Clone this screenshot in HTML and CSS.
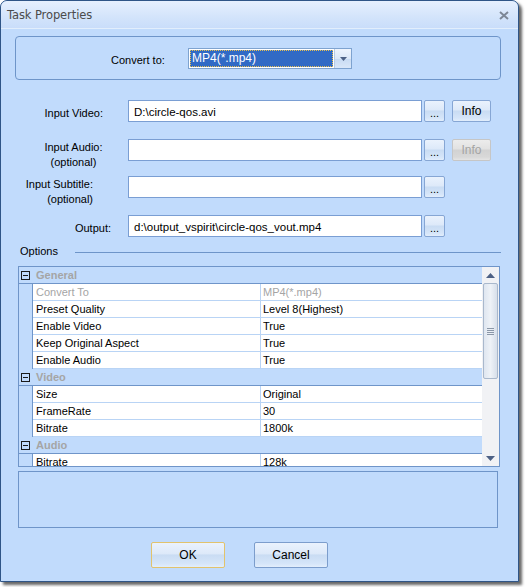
FILE: index.html
```html
<!DOCTYPE html>
<html>
<head>
<meta charset="utf-8">
<link rel="stylesheet" href="styles.css">
</head>
<body>
<div class="window">
  <div class="titlebar">
    <span class="title">Task Properties</span>
    <svg class="close" width="10" height="9" viewBox="0 0 10 9"><path d="M1 1 L9 8 M9 1 L1 8" stroke="#7d8796" stroke-width="2" fill="none"/></svg>
  </div>
  <div class="client">
    <div class="groupbox">
      <span class="conv-label">Convert to:</span>
      <div class="combo">
        <div class="combo-val"><span class="combo-text">MP4(*.mp4)</span></div>
        <div class="combo-btn"><svg width="7" height="4" viewBox="0 0 7 4"><path d="M0 0 H7 L3.5 4 Z" fill="#4d6185"/></svg></div>
      </div>
    </div>

    <div class="row row-video">
      <div class="lbl lbl-video">Input Video:</div>
      <div class="textbox">D:\circle-qos.avi</div>
      <button class="btn btn-dots">...</button>
      <button class="btn btn-info">Info</button>
    </div>
    <div class="row row-audio">
      <div class="lbl lbl-audio">Input Audio:<br>(optional)</div>
      <div class="textbox"></div>
      <button class="btn btn-dots">...</button>
      <button class="btn btn-info btn-disabled">Info</button>
    </div>
    <div class="row row-sub">
      <div class="lbl lbl-sub">Input Subtitle:<br>(optional)</div>
      <div class="textbox"></div>
      <button class="btn btn-dots">...</button>
    </div>
    <div class="row row-out">
      <div class="lbl lbl-out">Output:</div>
      <div class="textbox">d:\output_vspirit\circle-qos_vout.mp4</div>
      <button class="btn btn-dots">...</button>
    </div>

    <div class="options-head">
      <span class="options-title">Options</span>
      <div class="options-rule"></div>
    </div>

    <div class="grid">
      <div class="grid-rows">
        <div class="cat"><span class="exp"></span><span class="cat-name">General</span></div>
        <div class="prop"><span class="gutter"></span><span class="pname dis">Convert To</span><span class="pval dis">MP4(*.mp4)</span></div>
        <div class="prop"><span class="gutter"></span><span class="pname">Preset Quality</span><span class="pval">Level 8(Highest)</span></div>
        <div class="prop"><span class="gutter"></span><span class="pname">Enable Video</span><span class="pval">True</span></div>
        <div class="prop"><span class="gutter"></span><span class="pname">Keep Original Aspect</span><span class="pval">True</span></div>
        <div class="prop"><span class="gutter"></span><span class="pname">Enable Audio</span><span class="pval">True</span></div>
        <div class="cat"><span class="exp"></span><span class="cat-name">Video</span></div>
        <div class="prop"><span class="gutter"></span><span class="pname">Size</span><span class="pval">Original</span></div>
        <div class="prop"><span class="gutter"></span><span class="pname">FrameRate</span><span class="pval">30</span></div>
        <div class="prop"><span class="gutter"></span><span class="pname">Bitrate</span><span class="pval">1800k</span></div>
        <div class="cat"><span class="exp"></span><span class="cat-name">Audio</span></div>
        <div class="prop"><span class="gutter"></span><span class="pname">Bitrate</span><span class="pval">128k</span></div>
      </div>
      <div class="scrollbar">
        <div class="sb-arrow"><svg width="9" height="5" viewBox="0 0 9 5"><path d="M0 5 H9 L4.5 0 Z" fill="#4d6185"/></svg></div>
        <div class="sb-track">
          <div class="sb-thumb"><span class="grip"></span><span class="grip"></span><span class="grip"></span><span class="grip"></span></div>
        </div>
        <div class="sb-arrow"><svg width="9" height="5" viewBox="0 0 9 5"><path d="M0 0 H9 L4.5 5 Z" fill="#4d6185"/></svg></div>
      </div>
    </div>

    <div class="desc"></div>

    <div class="actions">
      <button class="btn dlg-btn btn-ok">OK</button>
      <button class="btn dlg-btn">Cancel</button>
    </div>
  </div>
</div>
</body>
</html>
```

FILE: styles.css
```css
html, body {
  margin: 0;
  padding: 0;
  background: #ffffff;
}
body {
  width: 525px;
  height: 587px;
  overflow: hidden;
  font-family: "Liberation Sans", Arial, sans-serif;
  font-size: 11px;
  color: #000;
}
.window {
  box-sizing: border-box;
  width: 519px;
  height: 582px;
  border: 1px solid #2f5587;
  border-radius: 7px 7px 0 0;
  background: #c1dbfc;
  box-shadow: 3px 3px 3px rgba(0, 0, 0, 0.6);
  overflow: hidden;
}
.titlebar {
  height: 28px;
  box-sizing: border-box;
  display: flex;
  align-items: center;
  justify-content: space-between;
  padding: 0 9px 0 6px;
  background: linear-gradient(#e6f0fe, #d3e4fb 60%, #c9ddfa);
  border-bottom: 1px solid #e2eefc;
  border-radius: 6px 6px 0 0;
}
.title {
  font-family: "DejaVu Sans", sans-serif;
  font-size: 11.5px;
  color: #4b4b4b;
  letter-spacing: -0.1px;
  padding-top: 1px;
}
.close {
  margin-top: 1px;
}
.client {
  padding-top: 7px;
}
.groupbox {
  box-sizing: border-box;
  width: 486px;
  height: 44px;
  margin-left: 14px;
  border: 1px solid #6e95c9;
  border-radius: 4px;
  display: flex;
  align-items: center;
  padding-left: 95px;
}
.conv-label {
  width: 77px;
  padding-top: 4px;
}
.combo {
  display: flex;
  box-sizing: border-box;
  width: 164px;
  height: 21px;
  border: 1px solid #7ea3d0;
  background: #fff;
  margin-top: 1px;
}
.combo-val {
  flex: 1;
  padding: 1px;
}
.combo-text {
  display: block;
  box-sizing: border-box;
  height: 100%;
  background: #316ac5;
  color: #fff;
  border: 1px dotted #e8c050;
  font-size: 12px;
  line-height: 15px;
  padding-left: 1px;
}
.combo-btn {
  width: 17px;
  box-sizing: border-box;
  border-left: 1px solid #b7cbe6;
  background: linear-gradient(#eef4fd, #dce8f8 50%, #c8dbf3 51%, #d9e7f9);
  display: flex;
  align-items: center;
  justify-content: center;
}
.row {
  display: flex;
  height: 22px;
  align-items: flex-start;
}
.row-video { margin-top: 20px; }
.row-audio { margin-top: 17px; }
.row-sub { margin-top: 15px; }
.row-out { margin-top: 17px; }
.lbl {
  box-sizing: border-box;
  width: 121px;
  margin-right: 6px;
  line-height: 15px;
  white-space: nowrap;
}
.lbl-video { text-align: right; padding-right: 19px; padding-top: 6px; }
.lbl-audio { text-align: center; padding-left: 24px; padding-top: 1px; }
.lbl-sub { text-align: right; padding-right: 29px; padding-top: 1px; }
.lbl-out { text-align: right; padding-right: 11px; padding-top: 6px; }
.textbox {
  box-sizing: border-box;
  width: 294px;
  height: 22px;
  border: 1px solid #7a9ed3;
  background: #fff;
  padding: 4px 5px 2px;
  font-size: 11.5px;
  line-height: 14px;
  white-space: nowrap;
  overflow: hidden;
}
.btn {
  box-sizing: border-box;
  font-family: "Liberation Sans", Arial, sans-serif;
  font-size: 11px;
  font-weight: normal;
  color: #000;
  border: 1px solid #86a6d4;
  border-radius: 2px;
  background: linear-gradient(#eaf2fd, #dde9f9 45%, #c9dcf3 50%, #d5e5f9 85%, #e2eefc);
  padding: 0;
  margin: 0;
  height: 22px;
}
.btn-dots {
  width: 21px;
  margin-left: 2px;
  padding-top: 3px;
}
.btn-info {
  width: 39px;
  margin-left: 7px;
  font-size: 12px;
}
.btn-disabled {
  color: #a4a4a4;
  border-color: #c6c6c6;
  background: linear-gradient(#ececec, #e2e2e2 45%, #d2d2d2 50%, #d8d8d8 85%, #e4e4e4);
}
.options-head {
  display: flex;
  align-items: center;
  height: 14px;
  margin-top: 7px;
  padding-left: 19px;
}
.options-title {
  margin-right: 17px;
}
.options-rule {
  width: 426px;
  height: 1px;
  background: #6e95c9;
  margin-top: 3px;
}
.grid {
  box-sizing: border-box;
  width: 482px;
  height: 201px;
  margin-top: 8px;
  margin-left: 17px;
  border: 1px solid #6f95c9;
  display: flex;
  overflow: hidden;
}
.grid-rows {
  width: 463px;
  overflow: hidden;
}
.cat, .prop {
  box-sizing: border-box;
  height: 17px;
  display: flex;
  align-items: center;
  white-space: nowrap;
}
.cat {
  background: #c1dbfc;
  border-bottom: 1px solid #6f95c9;
}
.exp {
  box-sizing: border-box;
  width: 9px;
  height: 9px;
  border: 1px solid #1a1a1a;
  margin-left: 2px;
  margin-right: 6px;
  position: relative;
  flex: none;
}
.exp::after {
  content: "";
  position: absolute;
  left: 1px;
  right: 1px;
  top: 3px;
  height: 1px;
  background: #1a1a1a;
}
.cat-name {
  font-weight: bold;
  color: #a5a5a5;
  padding-left: 0;
}
.prop {
  border-bottom: 1px solid #b9d4f5;
}
.gutter {
  width: 13px;
  height: 17px;
  background: #c1dbfc;
  border-right: 1px solid #6f95c9;
  flex: none;
}
.pname {
  box-sizing: border-box;
  width: 228px;
  height: 16px;
  line-height: 16px;
  background: #fff;
  border-right: 1px solid #b9d4f5;
  padding-left: 3px;
  flex: none;
}
.pval {
  flex: 1;
  height: 16px;
  line-height: 16px;
  background: #fff;
  padding-left: 2px;
}
.dis {
  color: #a5a5a5;
}
.scrollbar {
  width: 17px;
  display: flex;
  flex-direction: column;
  background: #f1f2f5;
}
.sb-arrow {
  height: 16px;
  display: flex;
  align-items: center;
  justify-content: center;
  flex: none;
}
.sb-track {
  flex: 1;
  padding: 0 1px;
}
.sb-thumb {
  box-sizing: border-box;
  height: 96px;
  border: 1px solid #a9b8cc;
  border-radius: 2px;
  background: linear-gradient(90deg, #dfe6f0, #eef2f7 50%, #d7dfea);
  display: flex;
  flex-direction: column;
  align-items: center;
  justify-content: center;
  gap: 1px;
}
.grip {
  width: 7px;
  height: 1px;
  background: #8a97a8;
}
.desc {
  box-sizing: border-box;
  width: 480px;
  height: 57px;
  margin-top: 4px;
  margin-left: 17px;
  border: 1px solid #6f95c9;
}
.actions {
  display: flex;
  gap: 29px;
  margin-top: 14px;
  padding-left: 150px;
}
.dlg-btn {
  width: 74px;
  height: 26px;
  font-size: 12px;
  border-color: #7c9dcc;
}
.btn-ok {
  border-color: #e2c36c;
}
```
